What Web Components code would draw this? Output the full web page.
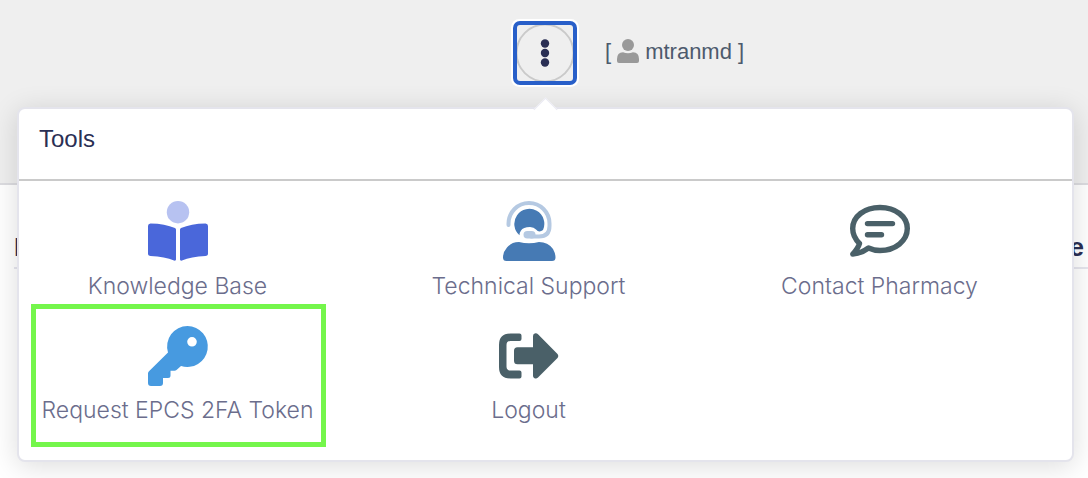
<!DOCTYPE html>
<html lang="en">
<head>
<meta charset="utf-8">
<title>Tools</title>
<style>
body { margin: 0; background: #fff; font-family: "Liberation Sans", Arial, sans-serif; }
</style>
</head>
<body>
<app-page></app-page>
<script>
const define = (name, html) => {
  const template = document.createElement('template');
  template.innerHTML = html;
  customElements.define(name, class extends HTMLElement {
    constructor() {
      super();
      this.attachShadow({ mode: 'open' }).append(template.content.cloneNode(true));
    }
    connectedCallback() {
      const link = this.shadowRoot.querySelector('a');
      if (link && this.hasAttribute('href')) link.setAttribute('href', this.getAttribute('href'));
    }
  });
};

define('menu-button', `
<style>
:host { display: block; }
button { display: block; width: 56px; height: 56px; padding: 0; border: 0; border-radius: 3px; background: #efefef; box-shadow: 0 0 0 4px #285fc9, 0 0 0 6px #fff; overflow: hidden; cursor: pointer; }
svg { display: block; }
</style>
<button type="button" aria-label="Tools menu" aria-expanded="true">
<svg width="56" height="56" viewBox="0 0 56 56"><circle cx="28" cy="28" r="28.500" fill="none" stroke="#cacaca" stroke-width="2"/><g fill="#2a2f54"><circle cx="28" cy="18.500" r="4.200"/><circle cx="28" cy="28" r="4.200"/><circle cx="28" cy="37.500" r="4.200"/></g></svg>
</button>`);

define('user-badge', `
<style>
:host { display: flex; align-items: center; gap: 6px; font-size: 22px; line-height: 28px; color: #4d5a6d; }
svg { display: block; margin-bottom: 2px; }
</style>
<span>[</span>
<svg width="22" height="24" viewBox="0 0 22 24" fill="#999" aria-hidden="true"><circle cx="11" cy="6" r="6"/><path d="M6 13.200Q11 15.400 16 13.200Q22 13.500 22 20V22Q22 24 20 24H2Q0 24 0 22V20Q0 13.500 6 13.200Z"/></svg>
<slot></slot>
<span>]</span>`);

define('top-bar', `
<style>
:host { display: grid; grid-template-columns: 1fr auto 1fr; column-gap: 32px; align-items: start; box-sizing: border-box; height: 185px; padding: 25px 0 0 2px; background: #efefef; border-bottom: 2px solid #dcdce0; }
menu-button { grid-column: 2; }
user-badge { margin-top: 13px; }
</style>
<menu-button></menu-button>
<user-badge>mtranmd</user-badge>`);

define('list-head', `
<style>
:host { display: flex; justify-content: space-between; margin-left: 14px; padding: 48px 4px 6px 0; border-bottom: 2px solid #e6e6ee; font-size: 26px; line-height: 28px; font-weight: bold; color: #2a2f54; }
</style>
<slot></slot>`);

define('tool-item', `
<style>
:host { display: block; margin-right: 34px; }
a { position: relative; display: flex; flex-direction: column; align-items: center; height: 124px; color: #6b6d8c; text-decoration: none; font-family: Inter, "Liberation Sans", sans-serif; font-weight: 300; font-size: 23px; line-height: 30px; white-space: nowrap; }
.icon { display: block; height: 60px; margin-bottom: 10px; }
:host([highlight]) a::after { content: ""; position: absolute; top: -21px; bottom: 2px; left: 12px; right: 10px; border: 5px solid #74f64b; }
</style>
<a href="#"><span class="icon"><slot name="icon"></slot></span><slot></slot></a>`);

define('tools-popover', `
<style>
:host { display: block; background: #fff; border: 2px solid #e4e4ec; border-radius: 8px; box-shadow: 0 4px 28px rgba(0,0,0,.14); }
.arrow { position: absolute; top: -8px; left: calc(50% - 9px); width: 16px; height: 16px; background: #fff; border: solid #e9e9f2; border-width: 1px 0 0 1px; transform: rotate(45deg); }
h2 { position: relative; margin: 0; padding: 16px 20px 26px; border-bottom: 2px solid #cacaca; font-size: 24px; line-height: 28px; font-weight: normal; color: #2a2f54; }
nav { display: grid; grid-template-columns: repeat(3, 1fr); padding: 20px 0 11px; }
svg { display: block; width: 60px; height: 60px; overflow: visible; }
</style>
<div class="arrow"></div>
<h2>Tools</h2>
<nav aria-label="Tools">
<tool-item href="#knowledge">
<svg slot="icon" viewBox="0 0 60 60"><circle cx="30" cy="11.200" r="11.200" fill="#b7c2f1"/><path fill="#4a67da" d="M28 28.500V58.500Q28 60 26 59.500Q17 55.500 2.500 55Q0 55 0 52.500V25Q0 22.500 2.500 22.400Q17 22.600 27 27Q28 27.500 28 28.500ZM32 28.500V58.500Q32 60 34 59.500Q43 55.500 57.500 55Q60 55 60 52.500V25Q60 22.500 57.500 22.400Q43 22.600 33 27Q32 27.500 32 28.500Z"/></svg>Knowledge Base</tool-item>
<tool-item href="#support">
<svg slot="icon" viewBox="0 0 60 60"><path fill="#467ab4" d="M20.500 34.200A15 15 0 1 1 44 29Q40 32 37 28.500Q35 26 31 26Q24 26 22 29.500Q20.500 31.500 20.500 34.200ZM20 41Q30 43.500 40 41Q49 41 54 48Q56.500 52.500 56.500 56.500Q56.500 60 53 60H7.500Q4 60 4 56.500Q4 51 8 46.500Q12.500 41 20 41Z"/><path fill="none" stroke="#b5c9e2" stroke-width="4" stroke-linecap="round" d="M9.500 24V22.500A20.500 20.500 0 0 1 50.500 22.500V25Q50.500 35.500 40 35.500H32"/><rect x="24.500" y="30" width="12" height="7.500" rx="3.750" fill="#b5c9e2"/></svg>Technical Support</tool-item>
<tool-item href="#contact">
<svg slot="icon" viewBox="0 0 60 60" fill="none" stroke="#4a6068" stroke-width="5.400" stroke-linecap="round" stroke-linejoin="round"><path d="M9.500 42.500Q2.700 36 2.700 27.600C2.700 15.500 14.500 6.500 30 6.500S57.300 15.500 57.300 27.600S45.500 49.500 30 49.500Q24 49.500 18.500 47Q11 52.500 2.800 53Q8 47.500 9.500 42.500Z"/><path d="M17.500 22.600H42.500M17.500 33.700H31.500"/></svg>Contact Pharmacy</tool-item>
<tool-item href="#token" highlight>
<svg slot="icon" viewBox="0 0 60 60"><path fill="#479ae0" fill-rule="evenodd" d="M39.500 1A20.500 20.500 0 1 1 33 41L28.500 45Q27.700 45.700 26.500 45.700H22.500V50.500Q22.500 53 20 53H15V58Q15 61 12 61H3Q0 61 0 58V48.500Q0 47.300 1 46.300L20 27.500A20.500 20.500 0 0 1 39.500 1ZM44 12A4.800 4.800 0 1 0 44 21.600A4.800 4.800 0 1 0 44 12Z"/></svg>Request EPCS 2FA Token</tool-item>
<tool-item href="#logout">
<svg slot="icon" viewBox="0 0 60 60" fill="#4a6068"><path d="M11.500 8.500H20.500Q22.500 8.500 22.500 10.500V14Q22.500 16 20.500 16H11.500Q7.500 16 7.500 20V41.500Q7.500 45.500 11.500 45.500H20.500Q22.500 45.500 22.500 47.500V51.500Q22.500 53.500 20.500 53.500H11.500Q0 53.500 0 42V20Q0 8.500 11.500 8.500ZM18.500 22.300H34V11Q34 8.500 36.500 8.300Q38 8.200 39 9.200L58.500 29Q60 31 58.500 33L39 52.500Q37.500 54 35.500 53.200Q34 52.500 34 51V39.300H18.500Q15 39.300 15 35.800V25.800Q15 22.300 18.500 22.300Z"/></svg>Logout</tool-item>
</nav>`);

define('app-page', `
<style>
:host { display: block; position: relative; min-height: 100vh; overflow: hidden; }
tools-popover { position: absolute; top: 107px; left: 17px; right: 14px; }
</style>
<top-bar></top-bar>
<list-head><span>I</span><span>e</span></list-head>
<tools-popover></tools-popover>`);
</script>
</body>
</html>
